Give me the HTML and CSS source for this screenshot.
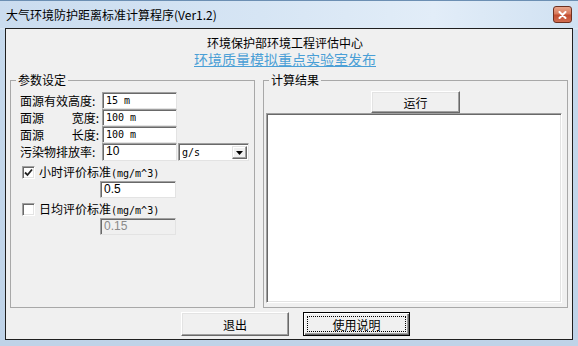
FILE: index.html
```html
<!DOCTYPE html>
<html lang="zh">
<head>
<meta charset="utf-8">
<title>大气环境防护距离标准计算程序</title>
<link rel="stylesheet" href="styles.css">
</head>
<body>
<div class="window">
  <div class="titlebar">
    <span class="title">大气环境防护距离标准计算程序(Ver1.2)</span>
    <span class="close"><svg width="9" height="8" viewBox="0 0 9 8"><path d="M1.5 1 L7.5 7 M7.5 1 L1.5 7" stroke="#fff" stroke-width="2" stroke-linecap="round"/></svg></span>
  </div>
  <div class="client">
    <div class="header">
      <div class="org">环境保护部环境工程评估中心</div>
      <div class="lab"><a class="link">环境质量模拟重点实验室发布</a></div>
    </div>
    <div class="groups">
      <fieldset class="group params">
        <legend>参数设定</legend>
        <div class="params-body">
          <div class="row">
            <span class="lbl"><span>面源有效高度:</span></span>
            <span class="field mono">15 m</span>
          </div>
          <div class="row">
            <span class="lbl"><span>面源</span><span>宽度:</span></span>
            <span class="field mono">100 m</span>
          </div>
          <div class="row">
            <span class="lbl"><span>面源</span><span>长度:</span></span>
            <span class="field mono">100 m</span>
          </div>
          <div class="row row-tall">
            <span class="lbl"><span>污染物排放率:</span></span>
            <span class="field tall">10</span>
            <span class="select"><span class="sel-text mono">g/s</span><span class="drop"><svg width="7" height="4" viewBox="0 0 7 4"><path d="M0 0 H7 L3.5 4 Z" fill="#000"/></svg></span></span>
          </div>
          <div class="check-row">
            <span class="cb"><svg width="9" height="9" viewBox="0 0 9 9"><path d="M1 4.5 L3.5 7 L8 1.5" stroke="#222" stroke-width="1.8" fill="none"/></svg></span>
            <span class="cb-text">小时评价标准<span class="mono">(mg/m^3)</span></span>
          </div>
          <div class="sub"><span class="field wide">0.5</span></div>
          <div class="check-row">
            <span class="cb"></span>
            <span class="cb-text">日均评价标准<span class="mono">(mg/m^3)</span></span>
          </div>
          <div class="sub"><span class="field wide disabled">0.15</span></div>
        </div>
      </fieldset>
      <fieldset class="group results">
        <legend>计算结果</legend>
        <div class="results-body">
          <span class="btn run">运行</span>
          <div class="output"></div>
        </div>
      </fieldset>
    </div>
    <div class="actions">
      <span class="btn exit">退出</span>
      <span class="btn default"><span class="focus">使用说明</span></span>
    </div>
  </div>
</div>
</body>
</html>
```
FILE: styles.css
```css
html, body {
  margin: 0;
  padding: 0;
  background: #c4d8ec;
}

.window {
  width: 578px;
  height: 346px;
  box-sizing: border-box;
  display: flex;
  flex-direction: column;
  font-family: "Noto Sans CJK SC", "Liberation Sans", sans-serif;
  color: #000;
  background: linear-gradient(180deg, #d0e1f3 0, #d9e7f5 28px, #c6d9ec 29px, #bfd3e8 100%);
  border-top: 1px solid #6c8fb3;
}

.titlebar {
  height: 27px;
  display: flex;
  align-items: flex-start;
  justify-content: space-between;
  padding: 0 6px;
  background: linear-gradient(90deg, #cadcef 0%, #d6e5f4 45%, #e2edf8 75%, #d0e1f2 100%);
}

.title {
  font-size: 12px;
  line-height: 16px;
  margin-top: 6px;
}

.close {
  width: 19px;
  height: 17px;
  margin-top: 5px;
  box-sizing: border-box;
  border: 1px solid #6e3020;
  border-radius: 3px;
  background: linear-gradient(180deg, #e9a58c 0%, #d7785a 48%, #c24c30 52%, #d16d50 100%);
  display: flex;
  align-items: center;
  justify-content: center;
}

.client {
  margin: 0 5px 6px;
  height: 312px;
  box-sizing: border-box;
  border: 1px solid #1f1f1f;
  background: #f0f0f0;
  display: flex;
  flex-direction: column;
}

.header {
  padding: 6px 8px 0 0;
  text-align: center;
}

.org {
  font-size: 12px;
  line-height: 15px;
}

.lab {
  font-size: 14px;
  line-height: 19px;
}

.link {
  color: #4a9fd6;
  text-decoration: underline;
}

.groups {
  display: flex;
  gap: 8px;
  padding-left: 4px;
  margin-top: 4px;
  height: 235px;
}

.group {
  margin: 0;
  padding: 0;
  min-width: 0;
  box-sizing: border-box;
  border: 1px solid #a8a8a8;
  height: 235px;
}

.group legend {
  font-size: 12px;
  line-height: 14px;
  padding: 0 2px;
  margin-left: 5px;
}

.params {
  width: 245px;
}

.results {
  width: 305px;
}

.params-body {
  padding: 5px 0 0 9px;
}

.row {
  display: flex;
  height: 17px;
  align-items: stretch;
}

.row-tall {
  height: 18px;
}

.lbl {
  width: 82px;
  box-sizing: border-box;
  padding-right: 3px;
  font-size: 12px;
  line-height: 17px;
  display: flex;
  justify-content: space-between;
}

.field {
  width: 75px;
  box-sizing: border-box;
  background: #fff;
  border-style: solid;
  border-width: 1px;
  border-color: #a0a0a0 #e3e3e3 #e3e3e3 #a0a0a0;
  box-shadow: inset 1px 1px 0 #696969;
  padding-left: 3px;
  font-family: "Liberation Sans", "Noto Sans CJK SC", sans-serif;
  font-size: 12px;
  line-height: 15px;
}

.mono {
  font-family: "DejaVu Sans Mono", "Liberation Mono", monospace;
  font-size: 10px;
}

.field.mono {
  line-height: 15px;
}

.select {
  width: 71px;
  margin-left: 1px;
  box-sizing: border-box;
  background: #fff;
  border-style: solid;
  border-width: 1px;
  border-color: #a0a0a0 #e3e3e3 #e3e3e3 #a0a0a0;
  box-shadow: inset 1px 1px 0 #696969;
  display: flex;
  align-items: center;
  justify-content: space-between;
  padding: 2px 1px 1px 3px;
}

.sel-text {
  font-size: 10px;
  line-height: 13px;
}

.drop {
  width: 15px;
  height: 13px;
  box-sizing: border-box;
  background: #f0f0f0;
  border: 1px solid;
  border-color: #e3e3e3 #696969 #696969 #e3e3e3;
  box-shadow: inset -1px -1px 0 #a0a0a0, inset 1px 1px 0 #fff;
  display: flex;
  align-items: center;
  justify-content: center;
}

.check-row {
  display: flex;
  align-items: center;
  height: 17px;
  margin-top: 3px;
}

.cb {
  width: 13px;
  height: 13px;
  box-sizing: border-box;
  margin-left: 2px;
  background: #fff;
  border: 1px solid;
  border-color: #a0a0a0 #fff #fff #a0a0a0;
  box-shadow: inset 1px 1px 0 #696969, inset -1px -1px 0 #e3e3e3;
  display: flex;
  align-items: center;
  justify-content: center;
}

.cb-text {
  margin-left: 4px;
  font-size: 12px;
  line-height: 17px;
}

.sub {
  display: flex;
  height: 17px;
  padding-left: 80px;
}

.field.wide {
  width: 76px;
}

.field.disabled {
  background: #f0f0f0;
  color: #8a8a8a;
}

.results-body {
  height: 220px;
  display: flex;
  flex-direction: column;
}

.btn {
  box-sizing: border-box;
  background: #f0f0f0;
  border: 1px solid;
  border-color: #fff #696969 #696969 #fff;
  box-shadow: inset -1px -1px 0 #a0a0a0, inset 1px 1px 0 #e3e3e3;
  font-size: 12px;
  display: flex;
  align-items: center;
  justify-content: center;
}

.run {
  width: 89px;
  height: 22px;
  margin: 4px auto 0;
  align-self: center;
}

.output {
  flex: 1;
  margin: 0 5px 4px 2px;
  background: #fff;
  border: 1px solid;
  border-color: #a0a0a0 #fff #fff #a0a0a0;
  box-shadow: inset 1px 1px 0 #696969, inset -1px -1px 0 #e3e3e3;
}

.actions {
  display: flex;
  gap: 14px;
  padding-left: 175px;
  margin-top: 4px;
}

.exit {
  width: 108px;
  height: 24px;
}

.default {
  width: 107px;
  height: 24px;
  border: 1px solid #000;
  box-shadow: inset 1px 1px 0 #fff, inset -1px -1px 0 #696969, inset -2px -2px 0 #a0a0a0;
  padding: 3px;
}

.focus {
  flex: 1;
  align-self: stretch;
  border: 1px dotted #000;
  display: flex;
  align-items: center;
  justify-content: center;
}
```
